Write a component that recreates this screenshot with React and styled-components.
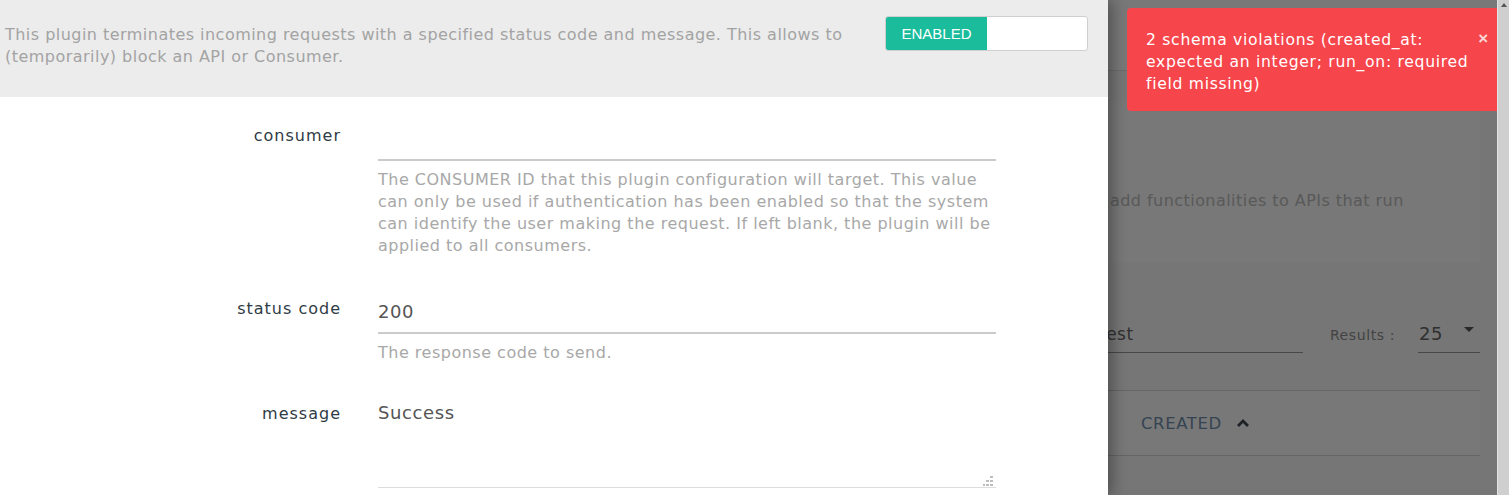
import styled, { createGlobalStyle } from "styled-components";

const GlobalStyle = createGlobalStyle`
  html, body, #root {
    margin: 0;
    height: 100%;
  }
  body {
    font-family: "DejaVu Sans", "Liberation Sans", sans-serif;
    overflow: hidden;
  }
  * {
    box-sizing: border-box;
  }
`;

const Screen = styled.div`
  display: flex;
  height: 100vh;
`;

const Viewport = styled.div`
  position: relative;
  flex: 1;
  overflow: hidden;
  background: #fbfbfb;
`;

const ScrollTrack = styled.div`
  width: 12px;
  background: #cfcfcf;
  border-left: 1px solid #e2e2e2;
  display: flex;
  justify-content: center;
  padding-top: 3px;
`;

const ScrollArrow = styled.div`
  width: 0;
  height: 0;
  border-left: 3px solid transparent;
  border-right: 3px solid transparent;
  border-bottom: 4px solid #555;
`;

/* page underneath the drawer */
const TopBar = styled.div`
  height: 71px;
  background: #fff;
  border-bottom: 1px solid #e6e6e6;
`;

const Content = styled.div`
  padding: 30px 17px 0 1090px;
`;

const Intro = styled.div`
  height: 162px;
  background: #fff;
  padding: 90px 0 0 20px;
  font-size: 16px;
  letter-spacing: 0.45px;
  color: #bdbdbd;
  white-space: nowrap;
`;

const Filters = styled.div`
  display: flex;
  align-items: flex-end;
  margin-top: 60px;
  white-space: nowrap;
`;

const SearchBox = styled.div`
  width: 213px;
  border-bottom: 1px solid #9a9a9a;
  padding: 0 0 8px 0;
  font-size: 17px;
  letter-spacing: 0.5px;
  color: #6a6a6a;
  text-indent: 9px;
`;

const ResultsLabel = styled.span`
  margin-left: 27px;
  margin-bottom: 10px;
  font-size: 14px;
  letter-spacing: 0.6px;
  color: #8e8e8e;
`;

const PageSize = styled.div`
  display: flex;
  justify-content: space-between;
  align-items: center;
  width: 62px;
  margin-left: 23px;
  border-bottom: 1px solid #9a9a9a;
  padding: 0 6px 8px 1px;
  font-size: 18px;
  letter-spacing: 0.5px;
  color: #666;
`;

const Caret = styled.span`
  width: 0;
  height: 0;
  border-left: 5px solid transparent;
  border-right: 5px solid transparent;
  border-top: 5px solid #555;
  margin-top: -8px;
`;

const TableHead = styled.div`
  display: flex;
  align-items: center;
  gap: 14px;
  margin-top: 37px;
  height: 66px;
  background: #fff;
  border-top: 1px solid #d6d6d6;
  border-bottom: 1px solid #d6d6d6;
  padding-left: 51px;
  font-size: 16.5px;
  letter-spacing: 0.6px;
  color: #7290ae;
`;

const Backdrop = styled.div`
  position: absolute;
  inset: 0;
  background: rgba(0, 0, 0, 0.53);
`;

/* plugin drawer */
const Drawer = styled.aside`
  position: absolute;
  top: 0;
  left: 0;
  bottom: 0;
  width: 1108px;
  background: #fff;
  box-shadow: 4px 0 14px rgba(0, 0, 0, 0.35);
`;

const DrawerHeader = styled.header`
  display: flex;
  align-items: flex-start;
  justify-content: space-between;
  height: 97px;
  background: #ececec;
  padding: 16px 20px 0 5px;
`;

const Description = styled.p`
  margin: 8px 0 0;
  width: 870px;
  font-size: 16px;
  letter-spacing: 0.47px;
  line-height: 22px;
  color: #a3a3a3;
`;

const Toggle = styled.div`
  display: flex;
  width: 203px;
  height: 35px;
  border: 1px solid #cfcfcf;
  border-radius: 3px;
  background: #fff;
  overflow: hidden;
`;

const ToggleOn = styled.span`
  display: flex;
  align-items: center;
  justify-content: center;
  width: 101px;
  background: #1abc9c;
  color: #fff;
  font-family: "Liberation Sans", sans-serif;
  font-size: 15px;
`;

const Form = styled.div`
  display: grid;
  grid-template-columns: 341px 618px;
  column-gap: 37px;
  padding-top: 24px;
  align-items: start;
`;

const Label = styled.label`
  padding-top: ${(p) => p.$top || 5}px;
  text-align: right;
  font-size: 16px;
  letter-spacing: 1px;
  line-height: 20px;
  color: #2f3b45;
`;

const Field = styled.div`
  position: relative;
  margin-bottom: ${(p) => p.$gap || 0}px;
`;

const Input = styled.div`
  height: 40px;
  padding-top: 7px;
  border-bottom: 2px solid #cbcbcb;
  font-size: 18px;
  letter-spacing: 0.6px;
  line-height: 22px;
  color: #555;
`;

const TextArea = styled.div`
  height: 92px;
  padding-top: 6px;
  border-bottom: 1px solid #ddd;
  font-size: 18px;
  letter-spacing: 0.6px;
  line-height: 22px;
  color: #555;
`;

const Grip = styled.svg`
  position: absolute;
  right: 3px;
  bottom: 2px;
`;

const Help = styled.p`
  margin: 8px 0 0;
  font-size: 16px;
  letter-spacing: 0.5px;
  line-height: 22px;
  color: #a8a8a8;
`;

/* error notification */
const Toast = styled.div`
  position: absolute;
  top: 8px;
  right: -4px;
  width: 374px;
  height: 103px;
  padding: 21px 24px 0 19px;
  background: #f6454b;
  border-radius: 4px;
  color: #fff;
  font-size: 15.6px;
  letter-spacing: 0.7px;
  line-height: 22px;
`;

const Close = styled.span`
  position: absolute;
  top: 20px;
  right: 12px;
  font-family: "Liberation Sans", sans-serif;
  font-weight: bold;
  font-size: 17px;
  color: #fcd6d7;
`;

const ResizeGrip = () => (
  <Grip width="10" height="10" viewBox="0 0 10 10">
    <g fill="#bdbdbd">
      <rect x="7" y="0" width="3" height="2" />
      <rect x="3" y="4" width="3" height="2" />
      <rect x="7" y="4" width="3" height="2" />
      <rect x="0" y="8" width="2" height="2" />
      <rect x="3" y="8" width="3" height="2" />
      <rect x="7" y="8" width="3" height="2" />
    </g>
  </Grip>
);

const ChevronUp = () => (
  <svg width="14" height="10" viewBox="0 0 14 10">
    <path d="M2 8 L7 3 L12 8" fill="none" stroke="#3e4852" strokeWidth="2.8" />
  </svg>
);

export default function App() {
  return (
    <>
      <GlobalStyle />
      <Screen>
        <Viewport>
          <TopBar />
          <Content>
            <Intro>add functionalities to APIs that run</Intro>
            <Filters>
              <SearchBox>test</SearchBox>
              <ResultsLabel>Results :</ResultsLabel>
              <PageSize>
                25
                <Caret />
              </PageSize>
            </Filters>
            <TableHead>
              CREATED
              <ChevronUp />
            </TableHead>
          </Content>
          <Backdrop />

          <Drawer>
            <DrawerHeader>
              <Description>
                This plugin terminates incoming requests with a specified status
                code and message. This allows to (temporarily) block an API or
                Consumer.
              </Description>
              <Toggle>
                <ToggleOn>ENABLED</ToggleOn>
              </Toggle>
            </DrawerHeader>

            <Form>
              <Label>consumer</Label>
              <Field $gap={37}>
                <Input />
                <Help>
                  The CONSUMER ID that this plugin configuration will target.
                  This value can only be used if authentication has been enabled
                  so that the system can identify the user making the request.
                  If left blank, the plugin will be applied to all consumers.
                </Help>
              </Field>

              <Label>status code</Label>
              <Field $gap={32}>
                <Input>200</Input>
                <Help>The response code to send.</Help>
              </Field>

              <Label $top={8}>message</Label>
              <Field>
                <TextArea>Success</TextArea>
                <ResizeGrip />
              </Field>
            </Form>
          </Drawer>

          <Toast>
            2 schema violations (created_at: expected an integer; run_on:
            required field missing)
            <Close>×</Close>
          </Toast>
        </Viewport>
        <ScrollTrack>
          <ScrollArrow />
        </ScrollTrack>
      </Screen>
    </>
  );
}
